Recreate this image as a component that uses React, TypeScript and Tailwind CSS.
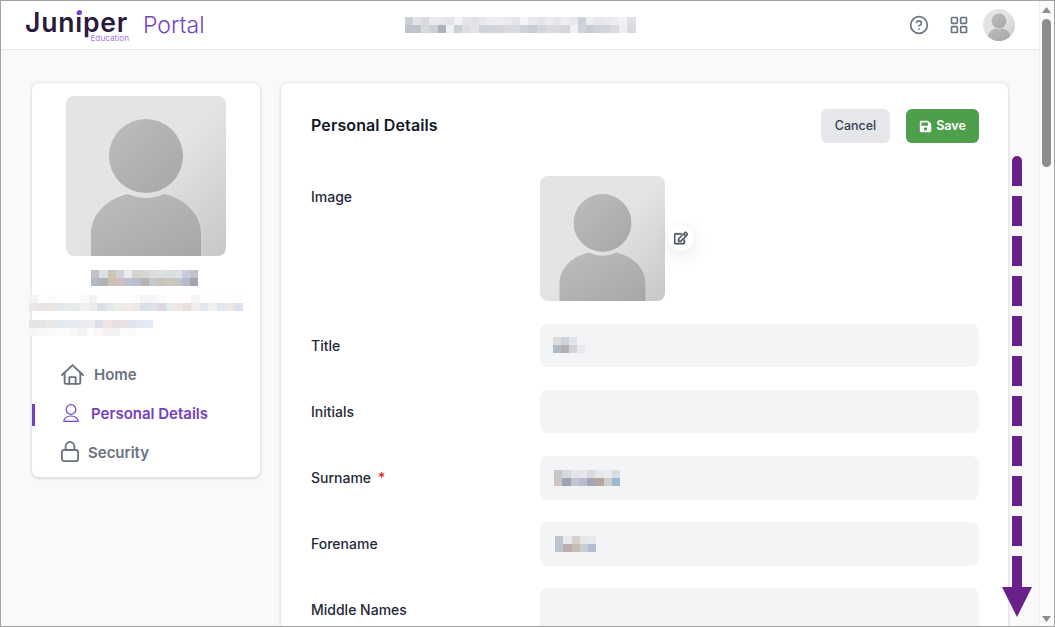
import { CircleHelp, LayoutGrid } from "lucide-react";
import { FaSave, FaRegEdit } from "react-icons/fa";

const headerBlur = [
  ["#ccd0d6", "#e2e4e8", "#d9dbdf", "#e8e9ed", "#e6e7eb", "#e2e4e8", "#f3f3f5", "#e4e6ea", "#e0e2e7", "#e8e9ec", "#eeeff1", "#ecedef", "#eaebee", "#e3e5e9", "#f4f4f6", "#e9eaed", "#e4e5e8", "#ebecef", "#e6e7ea", "#eeeef0", "#e7e8eb", "#cfd3d9", "#eceded", "#e6e7ea", "#e8e9ec", "#ecedf0", "#f2f2f4", "#dfe0e4"],
  ["#c0c4cc", "#c0c4cc", "#d8dade", "#cdd0d6", "#afb2ba", "#f0f1f3", "#cbced4", "#dddfe4", "#e4e5ea", "#d0d3d9", "#d2d4da", "#d2d4da", "#d8dade", "#d8dadf", "#cfd2d8", "#c9ccd3", "#d4d6db", "#d8dadf", "#d8dade", "#d4d6db", "#f1f2f4", "#d0d3d9", "#c8ccd3", "#d0d3d9", "#d2d4da", "#dadce0", "#eeeef1", "#d9dbdf"],
];
const nameBlur = [
  ["#bfc2c9", "#dcdfe4", "#cdc3b9", "#cfd2d9", "#eaebee", "#d6d3ce", "#d5dad4", "#dcdde0", "#dfe0e2", "#d8e0e6", "#dfe1e5", "#c6ccda", "#c4c1cc"],
  ["#b1b8c8", "#b3b3b3", "#cdbfb2", "#cfc2be", "#bcc4d0", "#b8bdcf", "#bab4b0", "#c4cacc", "#c9c4ba", "#cbc9be", "#bfc7c9", "#b3bbcc", "#a8a4ae"],
];
const emailBlur = [
  ["#f4f2f4", "#fdfdfd", "#fcfbfb", "#fefefe", "#fefefe", "#fefefe", "#fbfaf9", "#f4f3f3", "#fefefe", "#fefefe", "#fefefe", "#fdfdfd", "#fbfbfc", "#f5f5f7", "#f6f6f9", "#f8fafb", "#fefefe", "#fffbf8", "#fefefe", "#f5f4f4", "#fcfcfd", "#fefefe", "#fdfdfd", "#fefefe", "#fefefe"],
  ["#e8e8ea", "#e8e4e4", "#ebe4e4", "#e4e6ea", "#e6eaea", "#e9eaea", "#f3f1f0", "#eeeceb", "#d9dfea", "#e4e8ee", "#ecefe8", "#f0eaea", "#eee8e6", "#d8deea", "#e0e2ea", "#dcd8e4", "#e6ebf0", "#efe6e6", "#e8dcdc", "#efecf0", "#e4e6ee", "#f0eff1", "#e2e6ef", "#ede8e8", "#dbe2ee"],
];
const emailBlur2 = [
  ["#e4e4e6", "#e6e4e6", "#ece6e6", "#e2e8f0", "#e4eaf2", "#e6eaf0", "#ebebee", "#eceef0", "#d9dfea", "#efe6e4", "#e8dfe2", "#e8e2e8", "#e0e2ec", "#e2e9f4", "#e4ebf5"],
  ["#f6f5f6", "#f8f7f7", "#faf9f9", "#fafbfc", "#fbfbfc", "#f7f6f7", "#f3f1f3", "#fcfcfc", "#f9f7f7", "#f6f1f1", "#f4f1f1", "#fbfbfb", "#fbf8f8", "#fefefe", "#fefefe"],
];
const titleBlur = [
  ["#dcdcde", "#ced2da", "#e4e5ea"],
  ["#adbbc6", "#b5adb2", "#d2d2d9", "#e8e9ec"],
];
const surnameBlur = [
  ["#c6c7cc", "#d8d9de", "#e4e5e9", "#e6e7eb", "#ddd9dc", "#e8e8ec", "#e8ebec", "#d6dfe6"],
  ["#d0c4bc", "#9fa3b2", "#c2c4ce", "#b9bdcc", "#a3a5b8", "#b5a6a0", "#d0cfc9", "#9fb8cf"],
];
const forenameBlur = [
  ["#c0c4cf", "#e8e9ee", "#d6d1cc", "#e6e7eb", "#e8e9ed"],
  ["#bcc4d2", "#bcaeac", "#c8bcb2", "#c8ccd4", "#b4bccf"],
];

const Mosaic = ({ rows, cell = 8.25, height = 8 }: { rows: string[][]; cell?: number; height?: number }) => (
  <div className="flex flex-col">
    {rows.map((row, i) => (
      <div key={i} className="flex">
        {row.map((color, j) => (
          <div key={j} style={{ width: cell, height, background: color }} />
        ))}
      </div>
    ))}
  </div>
);

const Avatar = ({ id, className }: { id: string; className: string }) => (
  <svg viewBox="0 0 160 160" className={className}>
    <defs>
      <linearGradient id={`${id}-bg`} x1="0" y1="0" x2="1" y2="1">
        <stop offset="0.5" stopColor="#e3e4e6" />
        <stop offset="1" stopColor="#c6c7c9" />
      </linearGradient>
      <linearGradient id={`${id}-fg`} x1="0" y1="0" x2="1" y2="1">
        <stop offset="0" stopColor="#bcbdbf" />
        <stop offset="1" stopColor="#a6a7a9" />
      </linearGradient>
    </defs>
    <rect width="160" height="160" fill={`url(#${id}-bg)`} />
    <circle cx="80" cy="60" r="37" fill={`url(#${id}-fg)`} />
    <path d="M25 160V138C25 116 44 102 62 98Q80 106 98 98C116 102 135 116 135 138V160Z" fill={`url(#${id}-fg)`} />
  </svg>
);

const HomeIcon = () => (
  <svg viewBox="0 0 22 20" className="w-[23px] h-[21px] mb-[3px]" fill="none" stroke="#6b7280" strokeWidth="1.8" strokeLinecap="round" strokeLinejoin="round">
    <path d="M1 10.5L11 1L21 10.5" />
    <path d="M3.5 8.5V17.5A1.5 1.5 0 0 0 5 19H17A1.5 1.5 0 0 0 18.5 17.5V8.5" />
    <path d="M8 19V12.5H14V19" />
  </svg>
);

const PersonIcon = () => (
  <svg viewBox="0 0 16 18" className="w-[16px] h-[18px] mb-[4px]" fill="none" stroke="#743fc0" strokeWidth="1.2" strokeLinejoin="round">
    <circle cx="8" cy="5.5" r="4.8" />
    <path d="M0.8 17.4C0.8 14 4 12 8 12S15.2 14 15.2 17.4Z" />
  </svg>
);

const LockIcon = () => (
  <svg viewBox="0 0 18 21" className="w-[18px] h-[21px] mb-[4px]" fill="none" stroke="#6b7280" strokeWidth="1.8">
    <rect x="0.9" y="9" width="16.2" height="11.1" rx="2.2" />
    <path d="M4.6 9V5.4A4.4 4.4 0 0 1 13.4 5.4V9" />
  </svg>
);

const FormRow = ({ label, required, children }: { label: string; required?: boolean; children?: React.ReactNode }) => (
  <div className="flex mb-[22.6px]">
    <div className="w-[229px] shrink-0 h-[43.6px] pb-[0.5px] flex items-center text-[14px] font-medium text-[#1f2937]">
      {label}
      {required && <span className="ml-[7px] text-[#dc2626]">*</span>}
    </div>
    <div className="w-[439px] h-[43.6px] shrink-0 rounded-lg bg-[#f3f4f6] flex items-center pl-[13px]">{children}</div>
  </div>
);

const App = () => {
  return (
    <div className="relative w-[1055px] h-[627px] overflow-hidden border border-[#a3a3a3] bg-[#f9f9f9] flex font-['Inter',sans-serif]">
      <div className="w-[1038px] shrink-0 flex flex-col">
        {/* Top bar */}
        <header className="h-[49px] shrink-0 bg-white border-b border-[#e5e7eb] flex items-center pl-[24px] pr-[24px]">
          <div className="relative w-[104px] h-[40px] shrink-0">
            <span className="absolute left-0 top-[4.5px] text-[26.5px] leading-[24px] font-semibold tracking-[0.8px] text-[#2a1a3e]">
              Juniper
            </span>
            <span className="absolute left-[52px] top-[5px] w-[5px] h-[5px] rounded-full bg-[#7c3aed]" />
            <span className="absolute right-0 top-[29px] text-[8.2px] leading-[8px] text-[#a77be8]">Education</span>
          </div>
          <span className="ml-[14px] text-[23px] font-light text-[#7544c4]">Portal</span>
          <div className="ml-[200px]">
            <Mosaic rows={headerBlur} />
          </div>
          <div className="ml-auto flex items-center">
            <CircleHelp className="w-[20px] h-[20px] text-[#6b7280]" strokeWidth={2} />
            <LayoutGrid className="ml-[20px] w-[20px] h-[20px] text-[#6b7280]" strokeWidth={2} />
            <div className="ml-[14px] w-[32px] h-[32px] rounded-full overflow-hidden">
              <Avatar id="top" className="w-full h-full" />
            </div>
          </div>
        </header>

        <div className="flex items-start pt-[32px] pl-[30px] gap-[19px]">
          {/* Side card */}
          <aside className="w-[230px] shrink-0 h-[396px] bg-white border border-[#e5e7eb] rounded-lg shadow-sm flex flex-col">
            <div className="flex justify-center pt-[13px]">
              <Avatar id="side" className="w-[160px] h-[160px] rounded-lg" />
            </div>
            <div className="ml-[59px] mt-[14px]">
              <Mosaic rows={nameBlur} />
            </div>
            <div className="mt-[9px] ml-[-3px]">
              <Mosaic rows={emailBlur} cell={8.56} />
            </div>
            <div className="mt-[9px] ml-[-3px]">
              <Mosaic rows={emailBlur2} />
            </div>
            <nav className="mt-[20px] flex flex-col">
              <div className="h-[39px] flex items-center pl-[29px] text-[15px] font-semibold text-[#6b7280]">
                <HomeIcon />
                <span className="ml-[10px]">Home</span>
              </div>
              <div className="relative h-[39px] flex items-center pl-[31px] text-[15px] font-semibold text-[#743fc0]">
                <span className="absolute left-0 top-[9px] w-[3px] h-[22px] bg-[#743fc0]" />
                <PersonIcon />
                <span className="ml-[12px]">Personal Details</span>
              </div>
              <div className="h-[39px] flex items-center pl-[29px] text-[15px] font-semibold text-[#6b7280]">
                <LockIcon />
                <span className="ml-[9px]">Security</span>
              </div>
            </nav>
          </aside>

          {/* Details card */}
          <main className="w-[729px] shrink-0 h-[600px] bg-white border border-[#e5e7eb] rounded-lg shadow-sm pl-[30px] pt-[26px]">
            <div className="flex items-center w-[668px] h-[34px] mb-[33px]">
              <h1 className="pb-[2px] text-[16px] tracking-[0.12px] font-semibold text-[#111827]">Personal Details</h1>
              <button className="ml-auto w-[69px] h-[34px] rounded-md bg-[#e5e7eb] text-[12.5px] font-medium text-[#374151]">
                Cancel
              </button>
              <button className="ml-[16px] w-[73px] h-[34px] rounded-md bg-[#4f9e4b] text-[12.5px] font-semibold text-white flex items-center justify-center gap-[4px]">
                <FaSave className="w-[13px] h-[13px]" />
                Save
              </button>
            </div>

            <div className="flex mb-[22.6px]">
              <div className="w-[229px] shrink-0 pt-[12px] text-[14px] leading-[17px] font-medium text-[#1f2937]">Image</div>
              <div className="relative w-[125px] h-[125px]">
                <Avatar id="form" className="w-[125px] h-[125px] rounded-lg" />
                <div className="absolute left-[128px] top-[49px] w-[26px] h-[26px] rounded-full bg-white shadow-[0_4px_16px_rgba(0,0,0,0.1)] flex items-center justify-center">
                  <FaRegEdit className="w-[14px] h-[14px] text-[#4b5563]" stroke="currentColor" strokeWidth={24} />
                </div>
              </div>
            </div>

            <FormRow label="Title">
              <Mosaic rows={titleBlur} cell={8} />
            </FormRow>
            <FormRow label="Initials" />
            <FormRow label="Surname" required>
              <div className="ml-[1px]">
                <Mosaic rows={surnameBlur} />
              </div>
            </FormRow>
            <FormRow label="Forename">
              <div className="ml-[2px]">
                <Mosaic rows={forenameBlur} />
              </div>
            </FormRow>
            <FormRow label="Middle Names" />
          </main>
        </div>
      </div>

      {/* Window scrollbar */}
      <div className="relative w-[15px] shrink-0 bg-[#fbfbfb] border-l border-[#f0f0f0]">
        <div className="absolute left-[2px] top-[18px] w-[9px] h-[148px] rounded-full bg-[#8d8d8d]" />
        <svg viewBox="0 0 9 6" className="absolute left-[2px] top-[6px] w-[9px] h-[6px]">
          <path d="M4.5 0L9 6H0Z" fill="#8d8d8d" />
        </svg>
        <svg viewBox="0 0 9 6" className="absolute left-[2px] top-[615px] w-[9px] h-[6px]">
          <path d="M0 0H9L4.5 6Z" fill="#8d8d8d" />
        </svg>
      </div>

      {/* Scroll hint arrow drawn over the page */}
      <svg className="absolute left-[1001px] top-[155px] w-[30px] h-[462px]" viewBox="0 0 30 462">
        <path d="M10 30V5A5 5 0 0 1 20 5V30Z" fill="#68208a" />
        {[40, 80, 120, 160, 200, 240, 280, 320, 360, 400].map((y) => (
          <rect key={y} x="10" y={y} width="10" height={y === 400 ? 31 : 30} fill="#68208a" />
        ))}
        <path d="M0 431H30L15 461Z" fill="#68208a" />
      </svg>
    </div>
  );
};

export default App;
